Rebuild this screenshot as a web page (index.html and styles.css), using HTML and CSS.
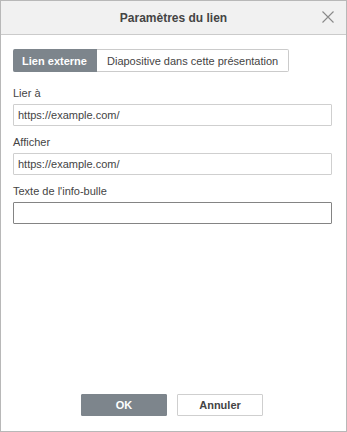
FILE: index.html
```html
<!DOCTYPE html>
<html>
<head>
    <meta charset="UTF-8" />
    <title>Paramètres du lien</title>
    <link rel="stylesheet" href="styles.css">
</head>
<body>
    <div class="dialog">
        <div class="dialog-header">
            <span class="dialog-title">Paramètres du lien</span>
            <span class="close-btn">
                <svg width="12" height="12" viewBox="0 0 12 12">
                    <path d="M0.5 0.5 L11.5 11.5 M11.5 0.5 L0.5 11.5" stroke="#8a8a8a" stroke-width="1.1" fill="none"/>
                </svg>
            </span>
        </div>
        <div class="dialog-body">
            <div class="tabs">
                <div class="tab active">Lien externe</div>
                <div class="tab">Diapositive dans cette présentation</div>
            </div>
            <div class="field">
                <label>Lier à</label>
                <div class="input">https://example.com/</div>
            </div>
            <div class="field">
                <label>Afficher</label>
                <div class="input">https://example.com/</div>
            </div>
            <div class="field">
                <label>Texte de l'info-bulle</label>
                <div class="input focused"></div>
            </div>
        </div>
        <div class="dialog-footer">
            <button class="btn primary">OK</button>
            <button class="btn">Annuler</button>
        </div>
    </div>
</body>
</html>
```

FILE: styles.css
```css
* {
    margin: 0;
    padding: 0;
    box-sizing: border-box;
    font-family: "Liberation Sans", Arial, sans-serif;
}

body {
    width: 347px;
    height: 432px;
    background: #fff;
}

.dialog {
    width: 347px;
    height: 432px;
    border: 1px solid #b8b8b8;
    display: flex;
    flex-direction: column;
}

.dialog-header {
    position: relative;
    height: 34px;
    background: #f1f1f1;
    border-bottom: 1px solid #cbcbcb;
    display: flex;
    align-items: center;
    justify-content: center;
}

.dialog-title {
    font-size: 12px;
    font-weight: bold;
    color: #444;
}

.close-btn {
    position: absolute;
    right: 12px;
    top: 10px;
    width: 12px;
    height: 12px;
    display: flex;
}

.dialog-body {
    flex: 1;
    padding: 14px 14px 0 12px;
}

.tabs {
    display: flex;
    height: 23px;
    margin-bottom: 14px;
}

.tab {
    font-size: 11px;
    color: #444;
    white-space: nowrap;
    flex-shrink: 0;
    border: 1px solid #cbcbcb;
    border-left: none;
    border-radius: 0 2px 2px 0;
    padding: 0 10px;
    display: flex;
    align-items: center;
}

.tab.active {
    background: #7d858c;
    border-color: #7d858c;
    color: #fff;
    font-weight: bold;
    border-radius: 2px 0 0 2px;
    width: 84px;
    padding: 0;
    justify-content: center;
}

.field {
    margin-bottom: 9px;
}

.field label {
    display: block;
    font-size: 11px;
    color: #444;
    line-height: 14px;
    margin-bottom: 4px;
}

.input {
    height: 22px;
    border: 1px solid #cfcfcf;
    border-radius: 1px;
    font-size: 11px;
    color: #444;
    padding: 0 4px;
    display: flex;
    align-items: center;
}

.input.focused {
    border-color: #848484;
}

.dialog-footer {
    display: flex;
    justify-content: center;
    gap: 10px;
    padding-right: 3px;
    margin-bottom: 15px;
}

.btn {
    width: 86px;
    height: 22px;
    font-size: 11px;
    font-weight: bold;
    color: #444;
    background: #fff;
    border: 1px solid #cfcfcf;
    border-radius: 1px;
}

.btn.primary {
    background: #7d858c;
    border-color: #7d858c;
    color: #fff;
}
```
